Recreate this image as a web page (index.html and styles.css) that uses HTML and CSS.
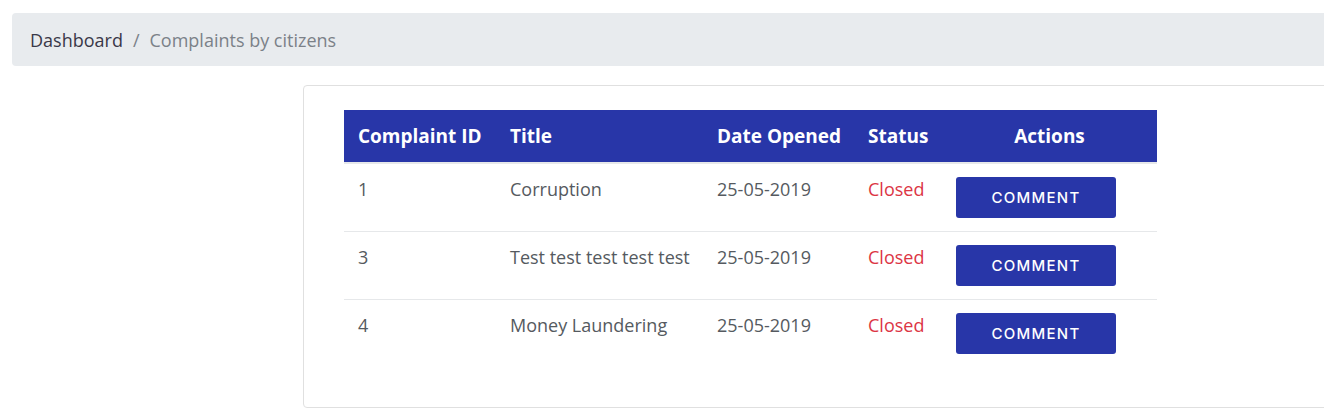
FILE: index.html
```html
<!DOCTYPE html>
<html>
<head>
<meta charset="utf-8">
<link rel="stylesheet" href="styles.css">
</head>
<body>
<div class="page">
  <nav class="breadcrumb">
    <span class="crumb">Dashboard</span>
    <span class="sep">/</span>
    <span class="crumb active">Complaints by citizens</span>
  </nav>
  <div class="card">
    <table class="complaints">
      <colgroup>
        <col class="c1"><col class="c2"><col class="c3"><col class="c4"><col class="c5">
      </colgroup>
      <thead>
        <tr>
          <th>Complaint ID</th>
          <th>Title</th>
          <th>Date Opened</th>
          <th>Status</th>
          <th class="center">Actions</th>
        </tr>
      </thead>
      <tbody>
        <tr>
          <td>1</td>
          <td>Corruption</td>
          <td>25-05-2019</td>
          <td class="status">Closed</td>
          <td><button class="btn">COMMENT</button></td>
        </tr>
        <tr>
          <td>3</td>
          <td>Test test test test test</td>
          <td>25-05-2019</td>
          <td class="status">Closed</td>
          <td><button class="btn">COMMENT</button></td>
        </tr>
        <tr>
          <td>4</td>
          <td>Money Laundering</td>
          <td>25-05-2019</td>
          <td class="status">Closed</td>
          <td><button class="btn">COMMENT</button></td>
        </tr>
      </tbody>
    </table>
  </div>
</div>
</body>
</html>
```
FILE: styles.css
```css
html, body {
  margin: 0;
  padding: 0;
  background: #ffffff;
  overflow: hidden;
}
body {
  font-family: "Open Sans", "Liberation Sans", sans-serif;
  color: #555a60;
}
.page {
  padding: 13px 0 0 12px;
  width: 1400px;
}
.breadcrumb {
  display: flex;
  align-items: center;
  gap: 10px;
  height: 53px;
  box-sizing: border-box;
  padding: 0 18px;
  background: #e8ebee;
  border-radius: 4px;
  font-size: 18px;
  width: 1400px;
}
.crumb { color: #3a3848; }
.crumb.active { color: #7b8188; }
.sep { color: #7b8188; }
.card {
  margin: 19px 0 0 291px;
  width: 1200px;
  height: 323px;
  box-sizing: border-box;
  border: 1px solid #e0e0e0;
  border-radius: 4px;
  padding: 24px 40px;
}
.complaints {
  border-collapse: collapse;
  table-layout: fixed;
  width: 813px;
  font-size: 18px;
}
.c1 { width: 152px; }
.c2 { width: 207px; }
.c3 { width: 151px; }
.c4 { width: 88px; }
.c5 { width: 215px; }
.complaints th {
  background: #2836a8;
  color: #ffffff;
  font-weight: 700;
  font-size: 19px;
  text-align: left;
  padding: 14px 14px;
  line-height: 24px;
  white-space: nowrap;
  border-bottom: 2px solid #e6e8ea;
}
.complaints th.center { text-align: center; }
.complaints td {
  padding: 13px 14px;
  line-height: 24px;
  vertical-align: top;
  border-bottom: 1px solid #e6e8ea;
  white-space: nowrap;
}
.complaints tbody tr:last-child td { border-bottom: none; }
.complaints td.status { color: #dc3545; }
.btn {
  display: block;
  width: 160px;
  height: 41px;
  border: none;
  border-radius: 3px;
  background: #2836a8;
  color: #ffffff;
  font-family: Inter, "DejaVu Sans", sans-serif;
  font-weight: 500;
  font-size: 15px;
  letter-spacing: 1.3px;
  padding: 0;
}
```
